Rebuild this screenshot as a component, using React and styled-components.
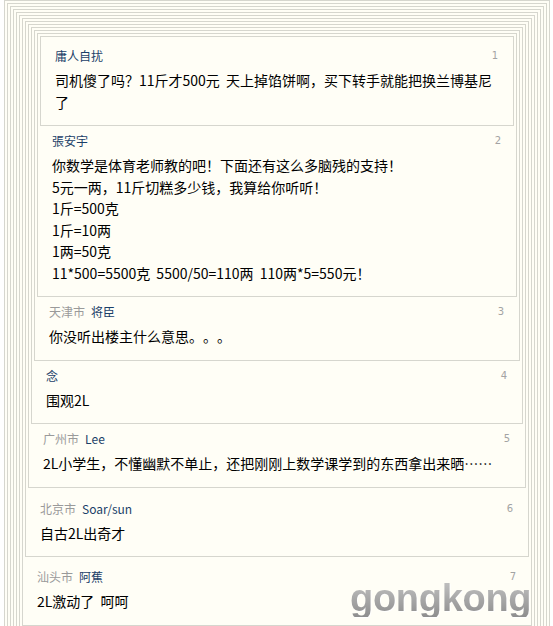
import React from "react";
import styled, { createGlobalStyle } from "styled-components";

const Global = createGlobalStyle`
  html, body { margin: 0; padding: 0; background: #ffffff; }
  body {
    font-family: "Noto Sans CJK SC", "Liberation Sans", sans-serif;
    text-spacing-trim: space-all;
  }
`;

const Page = styled.div`
  position: relative;
  width: 553px;
  height: 626px;
  overflow: hidden;
  box-sizing: border-box;
  padding: 0 3px 0 4px;
`;

const Box = styled.div`
  border: 1px solid #d6d6ce;
  background: #fffef6;
  margin: ${(p) => (p.$child ? "2px 2px 0" : "0")};
  padding-bottom: ${(p) => (p.$frame ? "2px" : "0")};
`;

const Body = styled.div`
  padding: ${(p) => p.$top}px 15px 12px 14px;
`;

const Header = styled.div`
  display: flex;
  align-items: center;
  justify-content: space-between;
  height: 18px;
  line-height: 18px;
  font-size: 12px;
`;

const Who = styled.div`
  display: flex;
  gap: 6px;
`;

const Loc = styled.span`
  color: #9a9a9a;
`;

const Name = styled.span`
  color: #1b3f68;
`;

const Num = styled.span`
  font-family: "DejaVu Sans", sans-serif;
  font-size: 10px;
  color: #a3a3a3;
`;

const Content = styled.div`
  margin-top: 5px;
  font-size: 14px;
  line-height: 21.5px;
  color: #000;
  word-spacing: 3px;
  text-spacing-trim: space-all;
  font-feature-settings: "chws" 0, "halt" 0;
`;

const Watermark = styled.div`
  position: absolute;
  left: 350px;
  top: 579px;
  font-family: "Liberation Sans", Arial, sans-serif;
  font-weight: bold;
  font-size: 38px;
  line-height: 1;
  letter-spacing: -0.3px;
  background: linear-gradient(180deg, #c4c4c4 0%, #a9a9a9 50%, #8e8e8e 100%);
  -webkit-background-clip: text;
  background-clip: text;
  color: transparent;
  filter: drop-shadow(1px 1px 0 rgba(255, 255, 255, 0.9));
  pointer-events: none;
`;

const floors = [
  {
    n: 1,
    name: "庸人自扰",
    text: ["司机傻了吗？11斤才500元 天上掉馅饼啊，买下转手就能把换兰博基尼了"],
    top: 10,
  },
  {
    n: 2,
    name: "張安宇",
    text: [
      "你数学是体育老师教的吧！下面还有这么多脑残的支持！",
      "5元一两，11斤切糕多少钱，我算给你听听！",
      "1斤=500克",
      "1斤=10两",
      "1两=50克",
      "11*500=5500克 5500/50=110两 110两*5=550元！",
    ],
    top: 6,
  },
  { n: 3, loc: "天津市", name: "将臣", text: ["你没听出楼主什么意思。。。"], top: 6 },
  { n: 4, name: "念", text: ["围观2L"], top: 6 },
  {
    n: 5,
    loc: "广州市",
    name: "Lee",
    text: ["2L小学生，不懂幽默不单止，还把刚刚上数学课学到的东西拿出来晒……"],
    top: 6,
  },
  { n: 6, loc: "北京市", name: "Soar/sun", text: ["自古2L出奇才"], top: 12 },
  { n: 7, loc: "汕头市", name: "阿蕉", text: ["2L激动了 呵呵"], top: 11 },
];

function FloorBody({ f }) {
  return (
    <Body $top={f.top}>
      <Header>
        <Who>
          {f.loc && <Loc>{f.loc}</Loc>}
          <Name>{f.name}</Name>
        </Who>
        <Num>{f.n}</Num>
      </Header>
      <Content>
        {f.text.map((t, i) => (
          <div key={i}>{t}</div>
        ))}
      </Content>
    </Body>
  );
}

function Thread() {
  let node = null;
  floors.forEach((f) => {
    const inner = node;
    node = (
      <Box $child key={f.n}>
        {inner}
        <FloorBody f={f} />
      </Box>
    );
  });
  // later floors further down the page (cropped out of view)
  for (let i = 0; i < 6; i++) {
    node = (
      <Box $child={i < 5} $frame key={"frame" + i}>
        {node}
      </Box>
    );
  }
  return node;
}

export default function App() {
  return (
    <>
      <Global />
      <Page>
        <Thread />
        <Watermark>gongkong</Watermark>
      </Page>
    </>
  );
}
